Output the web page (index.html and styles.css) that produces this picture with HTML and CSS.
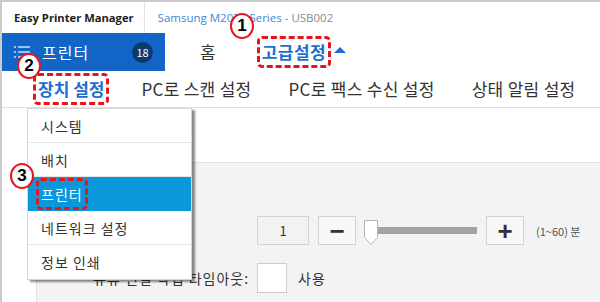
FILE: index.html
```html
<!doctype html>
<html>
	<head>
		<meta charset="UTF-8">
		<link rel="stylesheet" href="styles.css">
	</head>
	<body>
		<div class="window">
			<!-- title bar -->
			<div class="titlebar">
				<span class="app-name">Easy Printer Manager</span>
				<span class="device">Samsung M2070 Series <span class="port">- USB002</span></span>
			</div>

			<!-- main navigation -->
			<div class="navbar">
				<div class="side-head">
					<svg class="list-icon" width="16" height="12" viewBox="0 0 16 12">
						<rect x="0" y="0" width="2" height="2"/>
						<rect x="0" y="5" width="2" height="2"/>
						<rect x="0" y="10" width="2" height="2"/>
						<rect x="4" y="0" width="12" height="2"/>
						<rect x="4" y="5" width="12" height="2"/>
						<rect x="4" y="10" width="8" height="2"/>
					</svg>
					<span class="side-title">프린터</span>
					<span class="badge">18</span>
				</div>
				<span class="nav-item home">홈</span>
				<span class="nav-item advanced"><span class="mark">고급설정</span></span>
				<span class="caret"></span>
			</div>

			<!-- sub tabs -->
			<div class="tabs">
				<span class="tab active"><span class="mark">장치 설정</span></span>
				<span class="tab">PC로 스캔 설정</span>
				<span class="tab">PC로 팩스 수신 설정</span>
				<span class="tab">상태 알림 설정</span>
			</div>

			<!-- content -->
			<div class="content">
				<div class="strip"></div>
				<div class="panel">
					<div class="row">
						<span class="label">절전 시간:</span>
						<span class="num-box">1</span>
						<span class="step-btn">&minus;</span>
						<span class="slider">
							<svg class="thumb" width="14" height="25" viewBox="0 0 14 25">
								<path d="M0.5 0.5 H13.5 V17.5 L7 24.5 L0.5 17.5 Z" fill="#fff" stroke="#b4b4b4"/>
							</svg>
							<span class="track"></span>
						</span>
						<span class="step-btn">+</span>
						<span class="range">(1~60) 분</span>
					</div>
					<div class="row">
						<span class="label">유휴 연결 작업 타임아웃:</span>
						<span class="check"></span>
						<span class="use">사용</span>
					</div>
				</div>

				<ul class="menu">
					<li>시스템</li>
					<li>배치</li>
					<li class="selected"><span class="mark">프린터</span></li>
					<li>네트워크 설정</li>
					<li>정보 인쇄</li>
				</ul>
			</div>

			<!-- step markers -->
			<span class="step step-1">1</span>
			<span class="step step-2">2</span>
			<span class="step step-3">3</span>
		</div>
	</body>
</html>
```

FILE: styles.css
```css
body {
	margin: 0;
	background-color: #fff;
	font-family: "Noto Sans CJK KR", "Noto Sans", sans-serif;
	color: #333;
}
.window {
	position: relative;
	width: 598px;
	height: 300px;
	border-top: 2px solid #cbcbcb;
	border-left: 2px solid #cbcbcb;
	overflow: hidden;
	display: flex;
	flex-direction: column;
}

/* title bar */
.titlebar {
	height: 31px;
	display: flex;
	align-items: center;
	flex-shrink: 0;
}
.app-name {
	font-family: "Open Sans", "Noto Sans CJK KR", sans-serif;
	font-size: 11.2px;
	font-weight: bold;
	color: #222;
	padding-left: 12px;
	padding-right: 10px;
	line-height: 31px;
	border-right: 1px solid #e2e2e2;
	white-space: nowrap;
}
.device {
	font-family: "Open Sans", "Noto Sans CJK KR", sans-serif;
	font-size: 11.5px;
	color: #3f86d6;
	padding-left: 13px;
	white-space: nowrap;
}
.port {
	color: #8a8a8a;
}

/* navbar */
.navbar {
	height: 38px;
	display: flex;
	align-items: center;
	flex-shrink: 0;
}
.side-head {
	width: 165px;
	height: 38px;
	margin-left: -2px;
	background-color: #1265c6;
	display: flex;
	align-items: center;
	padding-left: 14px;
	box-sizing: border-box;
}
.list-icon {
	fill: #9cc3ee;
}
.side-title {
	font-size: 16px;
	color: #fff;
	letter-spacing: 1px;
	margin-left: 12px;
	line-height: 20px;
}
.badge {
	margin-left: auto;
	margin-right: 12px;
	width: 21px;
	height: 21px;
	border-radius: 50%;
	background-color: #0c3a6d;
	color: #fff;
	font-size: 11px;
	display: flex;
	align-items: center;
	justify-content: center;
}
.nav-item {
	font-size: 17px;
	line-height: 20px;
}
.home {
	margin-left: 35px;
	color: #333;
}
.advanced {
	margin-left: 46px;
	color: #1a6fd1;
	font-weight: bold;
	letter-spacing: 0.5px;
}
.caret {
	margin-left: 8px;
	width: 0;
	height: 0;
	border-left: 6px solid transparent;
	border-right: 6px solid transparent;
	border-bottom: 6px solid #1a6fd1;
	margin-bottom: 4px;
}

/* tabs */
.tabs {
	height: 36px;
	border-bottom: 1px solid #e0e0e0;
	display: flex;
	align-items: center;
	gap: 37px;
	padding-left: 36px;
	flex-shrink: 0;
}
.tab {
	font-size: 17px;
	letter-spacing: 0.3px;
	line-height: 20px;
	color: #333;
	white-space: nowrap;
}
.tab.active {
	color: #1a6fd1;
	font-weight: bold;
	letter-spacing: 0;
}

/* red dashed annotation */
.mark {
	display: inline-block;
	border: 3px dashed #e8141b;
	border-radius: 5px;
	padding: 3px 2px;
	margin: -6px -5px;
}

/* content */
.content {
	position: relative;
	flex: 1;
	display: flex;
	flex-direction: column;
}
.strip {
	height: 54px;
	flex-shrink: 0;
}
.panel {
	flex: 1;
	margin-left: 34px;
	background-color: #f3f3f3;
	border-top: 1px solid #e2e2e2;
	border-left: 1px solid #e2e2e2;
	padding-top: 53px;
	padding-left: 56px;
}
.row {
	display: flex;
	align-items: center;
	margin-bottom: 18px;
}
.label {
	width: 164px;
	font-size: 14px;
	letter-spacing: 1px;
	color: #333;
	white-space: nowrap;
}
.num-box {
	width: 50px;
	height: 27px;
	border: 1px solid #d2d2d2;
	background-color: #f2f2f2;
	font-size: 13px;
	display: flex;
	align-items: center;
	justify-content: center;
}
.step-btn {
	width: 36px;
	height: 27px;
	margin-left: 9px;
	border: 1px solid #d2d2d2;
	background-color: #f8f8f8;
	font-size: 26px;
	font-family: "Liberation Sans", sans-serif;
	font-weight: bold;
	color: #333;
	display: flex;
	align-items: center;
	justify-content: center;
	line-height: 1;
}
.slider {
	display: flex;
	align-items: center;
	margin-left: 8px;
	height: 29px;
}
.thumb {
	margin-top: 4px;
}
.track {
	width: 99px;
	height: 7px;
	background-color: #a3a3a3;
}
.range {
	font-size: 11px;
	color: #555;
	margin-left: 12px;
}
.check {
	width: 28px;
	height: 28px;
	border: 1px solid #cfcfcf;
	background-color: #fff;
}
.use {
	font-size: 14px;
	letter-spacing: 1px;
	margin-left: 11px;
}

/* dropdown menu */
.menu {
	position: absolute;
	left: 25px;
	top: 0;
	width: 163px;
	margin: 0;
	padding: 0;
	list-style: none;
	background-color: #fff;
	border: 1px solid #d6d6d6;
	box-shadow: 3px 2px 2px rgba(0, 0, 0, 0.45);
}
.menu li {
	height: 34px;
	line-height: 34px;
	padding-left: 13px;
	font-size: 14px;
	letter-spacing: 1px;
	color: #333;
	border-bottom: 1px solid #e4e4e4;
	box-sizing: border-box;
}
.menu li:last-child {
	border-bottom: none;
}
.menu li.selected {
	background-color: #0a97db;
	color: #fff;
	border-bottom: none;
	line-height: 20px;
	display: flex;
	align-items: center;
}

/* numbered step circles */
.step {
	position: absolute;
	width: 20px;
	height: 22px;
	border: 2.5px solid #e8141b;
	border-radius: 50%;
	background-color: #fff;
	color: #000;
	font-family: "Liberation Sans", sans-serif;
	font-weight: bold;
	font-size: 17px;
	display: flex;
	align-items: center;
	justify-content: center;
}
.step-1 {
	left: 228px;
	top: 11px;
}
.step-2 {
	left: 15px;
	top: 51px;
}
.step-3 {
	left: 8px;
	top: 161px;
}
```
